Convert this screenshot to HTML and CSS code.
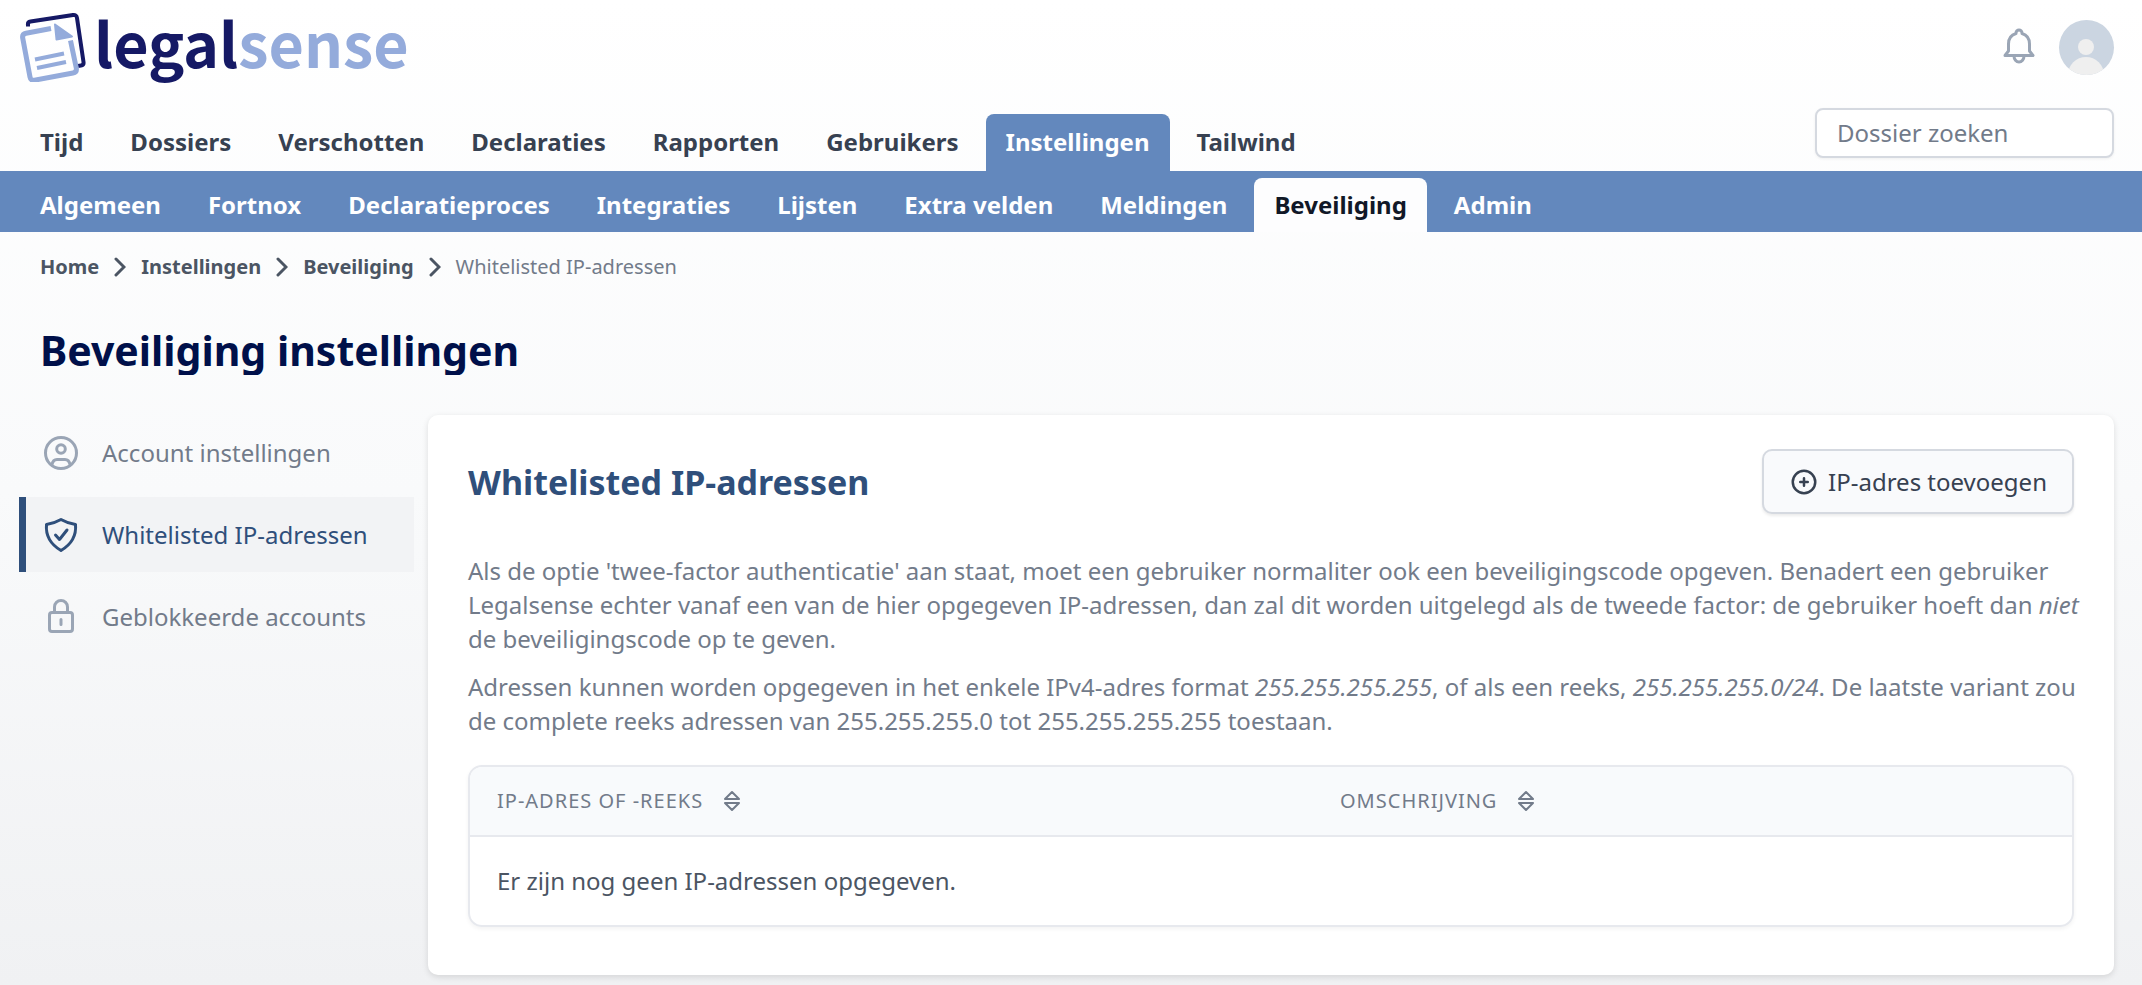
FILE: index.html
```html
<!DOCTYPE html>
<html lang="nl">
<head>
    <meta charset="UTF-8">
    <meta name="viewport" content="width=device-width, initial-scale=1.0">
    <title>Whitelisted IP-adressen - Legalsense</title>
    <link rel="stylesheet" href="styles.css">
</head>
<body>
<header>
    <div class="topbar">
        <a href="#" class="logo">
            <svg width="66" height="70" viewBox="0 0 66 70" fill="none" aria-hidden="true">
                <path d="M8 14.500V13Q7.500 10 10.500 9.500L53 3Q56.500 2.500 57 6L63.500 50Q64 53 61 53.500L58 54" stroke="#151965" stroke-width="4"/>
                <path d="M31 16.500L6 21.200Q2 22 2.700 26L10 65Q10.700 69 14.500 68.200L53 61Q57 60.200 56.300 56L50.500 28.500" stroke="#94abdb" stroke-width="5"/>
                <path d="M35 12.500L52 24.500L36.500 27.500Z" fill="#94abdb" stroke="#94abdb" stroke-width="2" stroke-linejoin="round"/>
                <path d="M15 47.500L44 41.500M17 56L46 50" stroke="#94abdb" stroke-width="4"/>
            </svg>
            <span class="logo-text">legal<span class="logo-light">sense</span></span>
        </a>
        <div class="user">
            <button type="button" class="bell" aria-label="Meldingen">
                <svg width="40" height="40" viewBox="0 0 40 40" fill="none" stroke="currentColor" stroke-width="3" stroke-linecap="round" stroke-linejoin="round">
                    <path d="M17 6.500V6a3 3 0 016 0v.5C28 8 30.500 12 30.500 17v7l3.500 4.500H6L9.500 24v-7C9.500 12 12 8 17 6.500zM15 29a5 6 0 0010 0"/>
                </svg>
            </button>
            <button type="button" class="avatar" aria-label="Account">
                <svg width="55" height="55" viewBox="0 0 55 55" aria-hidden="true">
                    <circle cx="27" cy="27" r="8" fill="#efefef"/>
                    <circle cx="27" cy="55" r="18" fill="#efefef"/>
                </svg>
            </button>
        </div>
    </div>
    <div class="mainbar">
        <nav class="tabs main-tabs">
            <a href="#">Tijd</a>
            <a href="#">Dossiers</a>
            <a href="#">Verschotten</a>
            <a href="#">Declaraties</a>
            <a href="#">Rapporten</a>
            <a href="#">Gebruikers</a>
            <a href="#" class="active">Instellingen</a>
            <a href="#">Tailwind</a>
        </nav>
        <input type="text" class="search" placeholder="Dossier zoeken" aria-label="Dossier zoeken">
    </div>
    <nav class="tabs sub-tabs">
        <a href="#">Algemeen</a>
        <a href="#">Fortnox</a>
        <a href="#">Declaratieproces</a>
        <a href="#">Integraties</a>
        <a href="#">Lijsten</a>
        <a href="#">Extra velden</a>
        <a href="#">Meldingen</a>
        <a href="#" class="active">Beveiliging</a>
        <a href="#">Admin</a>
    </nav>
</header>

<nav class="breadcrumb" aria-label="Kruimelpad">
    <a href="#">Home</a>
    <svg width="12" height="20" viewBox="0 0 12 20"><path d="M2 2l8 8-8 8"/></svg>
    <a href="#">Instellingen</a>
    <svg width="12" height="20" viewBox="0 0 12 20"><path d="M2 2l8 8-8 8"/></svg>
    <a href="#">Beveiliging</a>
    <svg width="12" height="20" viewBox="0 0 12 20"><path d="M2 2l8 8-8 8"/></svg>
    <span>Whitelisted IP-adressen</span>
</nav>

<h1>Beveiliging instellingen</h1>

<div class="layout">
    <nav class="sidebar">
        <a href="#">
            <svg width="40" height="40" viewBox="0 0 40 40">
                <circle cx="20" cy="20" r="15.500"/>
                <circle cx="20" cy="16" r="4.300"/>
                <path d="M11 31.500Q12 26.500 16 26.500H24Q28 26.500 29 31.500"/>
            </svg>
            Account instellingen
        </a>
        <a href="#" class="active">
            <svg width="40" height="40" viewBox="0 0 40 40">
                <path d="M20 4.500Q27 8.500 34.500 9.500Q36 26 20 35.500Q4 26 5.500 9.500Q13 8.500 20 4.500zM14.500 20l4 4.500 7.500-9.500"/>
            </svg>
            Whitelisted IP-adressen
        </a>
        <a href="#">
            <svg width="40" height="40" viewBox="0 0 40 40">
                <rect x="8.500" y="15.500" width="23" height="19" rx="2.500"/>
                <path d="M13.500 15.500V10a6.500 6.500 0 0113 0v5.500M20 22.500v5"/>
            </svg>
            Geblokkeerde accounts
        </a>
    </nav>

    <main class="card">
        <div class="card-header">
            <h2>Whitelisted IP-adressen</h2>
            <button type="button" class="btn">
                <svg width="30" height="30" viewBox="0 0 24 24"><path d="M12 9v3m0 0v3m0-3h3m-3 0H9m12 0a9 9 0 11-18 0 9 9 0 0118 0z"/></svg>
                IP-adres toevoegen
            </button>
        </div>
        <p>Als de optie 'twee-factor authenticatie' aan staat, moet een gebruiker normaliter ook een beveiligingscode opgeven. Benadert een gebruiker Legalsense echter vanaf een van de hier opgegeven IP-adressen, dan zal dit worden uitgelegd als de tweede factor: de gebruiker hoeft dan <i>niet</i> de beveiligingscode op te geven.</p>
        <p>Adressen kunnen worden opgegeven in het enkele IPv4-adres format <i>255.255.255.255</i>, of als een reeks, <i>255.255.255.0/24</i>. De laatste variant zou de complete reeks adressen van 255.255.255.0 tot 255.255.255.255 toestaan.</p>
        <div class="table-wrap">
            <table>
                <thead>
                <tr>
                    <th>
                        <a href="#">IP-adres of -reeks
                            <svg width="18" height="22" viewBox="0 0 18 22"><path d="M9 2l7 7H2zM9 20l7-7H2z"/></svg>
                        </a>
                    </th>
                    <th>
                        <a href="#">Omschrijving
                            <svg width="18" height="22" viewBox="0 0 18 22"><path d="M9 2l7 7H2zM9 20l7-7H2z"/></svg>
                        </a>
                    </th>
                </tr>
                </thead>
                <tbody>
                <tr>
                    <td colspan="2">Er zijn nog geen IP-adressen opgegeven.</td>
                </tr>
                </tbody>
            </table>
        </div>
    </main>
</div>
</body>
</html>
```
FILE: styles.css
```css
* {
    box-sizing: border-box;
}

body {
    margin: 0;
    min-height: 100vh;
    padding-bottom: 10px;
    font-family: 'Noto Sans', sans-serif;
    font-size: 24px;
    line-height: 34px;
    color: #727b8a;
    background: linear-gradient(#ffffff, #f9fafb 50%, #f0f1f3);
}

a {
    color: inherit;
    text-decoration: none;
}

button,
input {
    font: inherit;
}

.topbar {
    display: flex;
    justify-content: space-between;
    align-items: center;
    height: 94px;
    margin-bottom: 14px;
    padding: 0 28px 0 20px;
}

.logo {
    display: flex;
    align-items: center;
    gap: 8px;
}

.logo-text {
    padding-bottom: 10px;
    font-family: 'Noto Sans CJK JP', sans-serif;
    font-size: 61px;
    font-weight: 700;
    line-height: 72px;
    color: #151965;
}

.logo-light {
    color: #94abdb;
}

.user {
    display: flex;
    align-items: center;
    gap: 20px;
}

.bell,
.avatar {
    display: flex;
    padding: 0;
    border: 0;
    background: none;
    color: #9aa5b5;
}

.avatar {
    border-radius: 50%;
    overflow: hidden;
    background: #cbd5e1;
}

.mainbar {
    display: flex;
    justify-content: space-between;
    align-items: flex-end;
    padding: 0 28px 0 20px;
}

.tabs {
    display: flex;
    gap: 7px;
    font-weight: 700;
}

.tabs a {
    padding: 10px 20px;
    border-radius: 8px 8px 0 0;
}

.main-tabs {
    color: #374151;
}

.main-tabs a {
    padding: 11px 20px 12px;
}

.main-tabs .active {
    background: #6388bd;
    color: #fff;
}

.sub-tabs {
    padding: 7px 20px 0;
    background: #6388bd;
    color: #fff;
}

.sub-tabs .active {
    background: #fdfdfe;
    color: #111827;
}

.search {
    width: 299px;
    height: 50px;
    margin-bottom: 13px;
    padding: 0 20px 2px;
    border: 2px solid #d5d9e0;
    border-radius: 8px;
    background: #fff;
    box-shadow: 0 1px 3px rgba(0, 0, 0, 0.06);
}

.search::placeholder {
    color: #727b8a;
    opacity: 1;
}

.breadcrumb {
    display: flex;
    align-items: center;
    gap: 15px;
    padding: 20px 40px 0;
    font-size: 20px;
    line-height: 30px;
}

.breadcrumb a {
    font-weight: 700;
    color: #4b5563;
}

.breadcrumb svg {
    fill: none;
    stroke: #4b5563;
    stroke-width: 3;
    stroke-linecap: round;
}

h1 {
    margin: 44px 40px 0;
    overflow: hidden;
    font-size: 41px;
    line-height: 49px;
    font-weight: 700;
    color: #00104a;
}

.layout {
    display: flex;
    align-items: flex-start;
    gap: 14px;
    padding: 0 28px 0 19px;
    margin-top: 40px;
}

.sidebar {
    display: flex;
    flex-direction: column;
    flex: none;
    gap: 7px;
    width: 395px;
}

.sidebar a {
    display: flex;
    align-items: center;
    gap: 21px;
    height: 75px;
    padding-left: 15px;
    border-left: 7px solid transparent;
}

.sidebar svg {
    fill: none;
    stroke: #9aa5b5;
    stroke-width: 3;
    stroke-linecap: round;
    stroke-linejoin: round;
}

.sidebar .active {
    border-color: #2f4f7b;
    background: #f2f3f5;
    color: #2f4f7b;
}

.sidebar .active svg {
    stroke: #2f4f7b;
}

.card {
    flex: 1;
    padding: 34px 40px 48px;
    border-radius: 10px;
    background: #fff;
    box-shadow: 0 2px 6px rgba(0, 0, 0, 0.12);
}

.card-header {
    display: flex;
    justify-content: space-between;
    align-items: center;
    margin-bottom: 40px;
}

h2 {
    margin: 0;
    font-size: 34px;
    line-height: 40px;
    font-weight: 700;
    color: #2f4f7b;
}

.btn {
    display: flex;
    align-items: center;
    gap: 9px;
    height: 65px;
    padding: 0 25px;
    border: 2px solid #d5d9e0;
    border-radius: 10px;
    background: #f9fafc;
    color: #374151;
    box-shadow: 0 2px 3px rgba(0, 0, 0, 0.08);
}

.btn svg,
th svg {
    fill: none;
    stroke: currentColor;
    stroke-width: 2;
    stroke-linecap: round;
    stroke-linejoin: round;
}

/* text may run slightly into the card padding */
.card p {
    margin: 0 -14px 14px 0;
}

.table-wrap {
    margin-top: 27px;
    border: 2px solid #e7e9ee;
    border-radius: 14px;
    overflow: hidden;
    box-shadow: 0 2px 4px rgba(0, 0, 0, 0.05);
}

table {
    width: 100%;
    border-collapse: collapse;
    table-layout: fixed;
    text-align: left;
}

th {
    height: 69px;
    padding: 0 27px;
    border-bottom: 2px solid #e7e9ee;
    background: #f8fafc;
    font-size: 20px;
    font-weight: 400;
    letter-spacing: 1px;
    text-transform: uppercase;
}

th:first-child {
    width: 843px;
}

th a {
    display: flex;
    align-items: center;
    gap: 20px;
}

td {
    height: 89px;
    padding: 0 27px;
    color: #4b5563;
}
```
